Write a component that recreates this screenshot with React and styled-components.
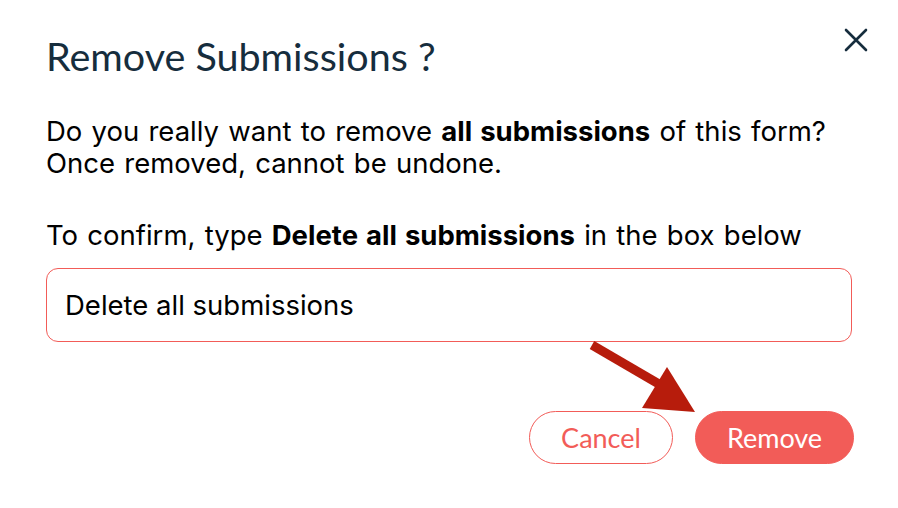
import React, { useState } from 'react'
import styled, { createGlobalStyle } from 'styled-components'

const GlobalStyle = createGlobalStyle`
  body {
    margin: 0;
    background: #ffffff;
  }
  * { box-sizing: border-box; }
`

const Dialog = styled.div`
  position: relative;
  width: 898px;
  height: 508px;
  padding: 26px 27px 0 46px;
  background: #ffffff;
`

const Header = styled.div`
  display: flex;
  justify-content: space-between;
  align-items: flex-start;
`

const Title = styled.h2`
  margin: 8px 0 0;
  font-family: 'Lato', 'Noto Sans', sans-serif;
  font-weight: 400;
  font-size: 39.5px;
  line-height: 44px;
  color: #162d3d;
`

const CloseButton = styled.button`
  display: flex;
  align-items: center;
  justify-content: center;
  width: 30px;
  height: 30px;
  margin-top: -1px;
  padding: 0;
  border: none;
  background: transparent;
  color: #162d3d;
  cursor: pointer;
`

const Body = styled.div`
  margin-top: 37px;
  padding-right: 19px;
  font-family: 'Inter', 'Liberation Sans', sans-serif;
  font-size: 27.5px;
  line-height: 32px;
  word-spacing: 1.5px;
  color: #000000;
`

const Paragraph = styled.p`
  margin: 0 0 ${p => p.gap || 0}px;
`

const Strong = styled.b`
  font-weight: 700;
`

const TextField = styled.input`
  display: block;
  width: 100%;
  height: 74px;
  margin-top: 17px;
  padding: 0 18px;
  border: 1px solid #f25c58;
  border-radius: 12px;
  font-family: 'Inter', 'Liberation Sans', sans-serif;
  font-size: 27.5px;
  word-spacing: 0;
  color: #000000;
  outline: none;
`

const Footer = styled.div`
  display: flex;
  justify-content: flex-end;
  gap: 22px;
  margin-top: 69px;
  padding-right: 17px;
`

const Button = styled.button`
  height: 53px;
  min-width: ${p => p.width}px;
  padding: 0 30px;
  border-radius: 27px;
  border: 1px solid #f25c58;
  background: ${p => (p.primary ? '#f25c58' : '#ffffff')};
  color: ${p => (p.primary ? '#ffffff' : '#f25c58')};
  font-family: 'Lato', 'Noto Sans', sans-serif;
  font-size: 27px;
  cursor: pointer;
`

const Pointer = styled.svg`
  position: absolute;
  left: 580px;
  top: 335px;
  pointer-events: none;
`

export default function App() {
  const [value, setValue] = useState('Delete all submissions')

  return (
    <Dialog>
      <GlobalStyle />
      <Header>
        <Title>Remove Submissions ?</Title>
        <CloseButton aria-label="Close">
          <svg width="24" height="24" viewBox="0 0 24 24">
            <path d="M2 2 L22 22 M22 2 L2 22" stroke="currentColor" strokeWidth="2.6" strokeLinecap="round" />
          </svg>
        </CloseButton>
      </Header>
      <Body>
        <Paragraph gap={40}>
          Do you really want to remove <Strong>all submissions</Strong> of this form?
          <br />
          Once removed, cannot be undone.
        </Paragraph>
        <Paragraph>
          To confirm, type <Strong>Delete all submissions</Strong> in the box below
        </Paragraph>
        <TextField value={value} onChange={e => setValue(e.target.value)} />
      </Body>
      <Footer>
        <Button width={144}>Cancel</Button>
        <Button primary width={159}>Remove</Button>
      </Footer>
      <Pointer width="130" height="90" viewBox="0 0 130 90">
        <path d="M12 10 L84 52" stroke="#b71c0c" strokeWidth="9" />
        <polygon points="87,32 62,73 115,77" fill="#b71c0c" />
      </Pointer>
    </Dialog>
  )
}
